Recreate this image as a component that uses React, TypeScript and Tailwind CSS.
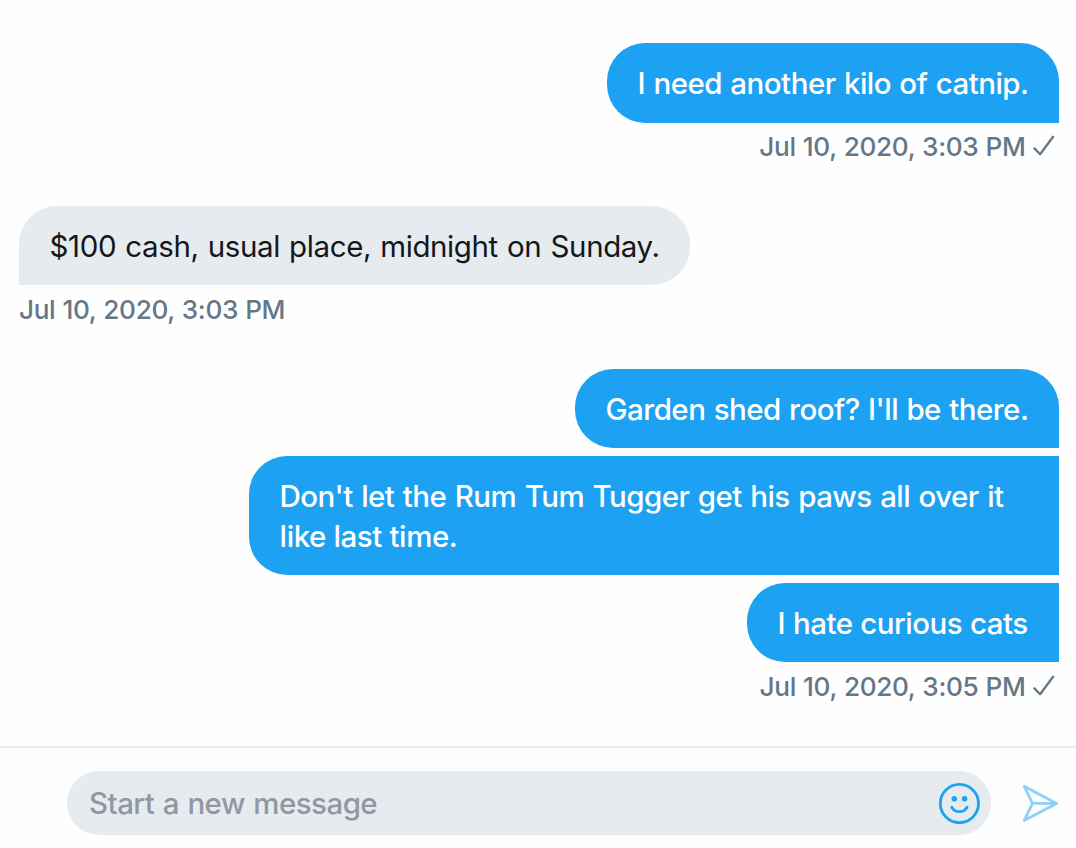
import type { ReactNode } from "react";

function CheckIcon() {
  return (
    <svg className="h-8 w-[26px]" viewBox="0 0 26 32" fill="none" stroke="#657786" strokeWidth="2.3" strokeLinecap="round" strokeLinejoin="round" aria-hidden="true">
      <path d="M1.4 17.4 7.1 23.2 20.1 5.8" />
    </svg>
  );
}

function SmileIcon() {
  return (
    <svg className="size-[44px]" viewBox="0 0 44 44" fill="none" aria-hidden="true">
      <circle cx="22.4" cy="22.5" r="19.1" stroke="#1da1f2" strokeWidth="2.8" />
      <circle cx="17.3" cy="17.7" r="2.8" fill="#1da1f2" />
      <circle cx="27.6" cy="17.7" r="2.8" fill="#1da1f2" />
      <path d="M14.8 26.3c1.5 2.8 4.3 4.4 7.6 4.4s6.1-1.6 7.6-4.4" stroke="#1da1f2" strokeWidth="2.8" strokeLinecap="round" />
    </svg>
  );
}

function SendIcon() {
  return (
    <svg className="size-[40px]" viewBox="0 0 40 40" fill="none" stroke="#8ed0f9" strokeWidth="2.8" strokeLinecap="round" strokeLinejoin="round" aria-hidden="true">
      <path d="M4.2 3.2 36.6 20.4 4.2 37.6 12.4 20.4ZM12.4 20.4H36.6" />
    </svg>
  );
}

function Bubble({ className, children }: { className: string; children: ReactNode }) {
  return (
    <div className={`pt-5 pr-[30px] pl-[30.6px] text-[29.5px] leading-10 whitespace-nowrap ${className}`}>
      {children}
    </div>
  );
}

function Timestamp({ className, children, sent = false }: { className: string; children: ReactNode; sent?: boolean }) {
  return (
    <div className={`flex h-8 text-[26.2px] leading-8 tracking-[-0.35px] whitespace-nowrap text-[#657786] [word-spacing:0.5px] ${className}`}>
      <span>{children}</span>
      {sent && <span className="ml-[7.5px]"><CheckIcon /></span>}
    </div>
  );
}

export default function App() {
  return (
    <div className="flex h-[848px] w-[1076px] flex-col overflow-hidden bg-[#fefefe] font-[Inter,'Liberation_Sans',sans-serif] font-[450]">
      <main className="flex h-[746px] flex-col pt-[43px] pr-[17px] pl-[19px]">
        <section className="flex flex-col items-end">
          <Bubble className="h-20 w-[452px] rounded-[38px] rounded-br-none bg-[#1da1f2] tracking-[-0.52px] text-white [word-spacing:1px]">
            I need another kilo of catnip.
          </Bubble>
          <Timestamp className="mt-2" sent>Jul 10, 2020, 3:03 PM</Timestamp>
        </section>

        <section className="mt-[43px] flex flex-col items-start">
          <Bubble className="h-[79px] w-[671px] rounded-[38px] rounded-bl-none bg-[#e6ebef] font-normal tracking-[-0.4px] text-[#14171a] [word-spacing:1.3px]">
            $100 cash, usual place, midnight on Sunday.
          </Bubble>
          <Timestamp className="mt-[9px] -mb-px">Jul 10, 2020, 3:03 PM</Timestamp>
        </section>

        <section className="mt-11 flex flex-col items-end gap-2">
          <Bubble className="h-[79px] w-[484px] rounded-[38px] rounded-br-none bg-[#1da1f2] tracking-[-0.53px] text-white [word-spacing:1px]">
            Garden shed roof? I'll be there.
          </Bubble>
          <Bubble className="h-[119px] w-[810px] rounded-l-[38px] bg-[#1da1f2] text-white">
            <span className="tracking-[-0.58px] [word-spacing:1.3px]">Don't let the Rum Tum Tugger get his paws all over it</span>
            <br />
            <span className="tracking-[-0.4px]">like last time.</span>
          </Bubble>
          <Bubble className="h-[79px] w-[312px] rounded-l-[38px] bg-[#1da1f2] tracking-[-0.52px] text-white [word-spacing:0.5px]">
            I hate curious cats
          </Bubble>
          <Timestamp className="mt-px" sent>Jul 10, 2020, 3:05 PM</Timestamp>
        </section>
      </main>

      <footer className="flex h-[102px] items-start border-t-2 border-[#e6ebef] pt-[23px] pl-[67px]">
        <div className="flex h-16 w-[924px] items-center rounded-full bg-[#e6ebef] pr-[10px] pl-[22px]">
          <input
            className="h-10 flex-1 bg-transparent text-[29.5px] leading-10 tracking-[-0.55px] text-[#9197a3] outline-none [word-spacing:1.2px] placeholder:text-[#9197a3] placeholder:opacity-100"
            placeholder="Start a new message"
            aria-label="Start a new message"
          />
          <button className="size-[44px]" aria-label="Add emoji"><SmileIcon /></button>
        </div>
        <button className="mt-3 ml-[29px] size-[40px]" aria-label="Send"><SendIcon /></button>
      </footer>
    </div>
  );
}
